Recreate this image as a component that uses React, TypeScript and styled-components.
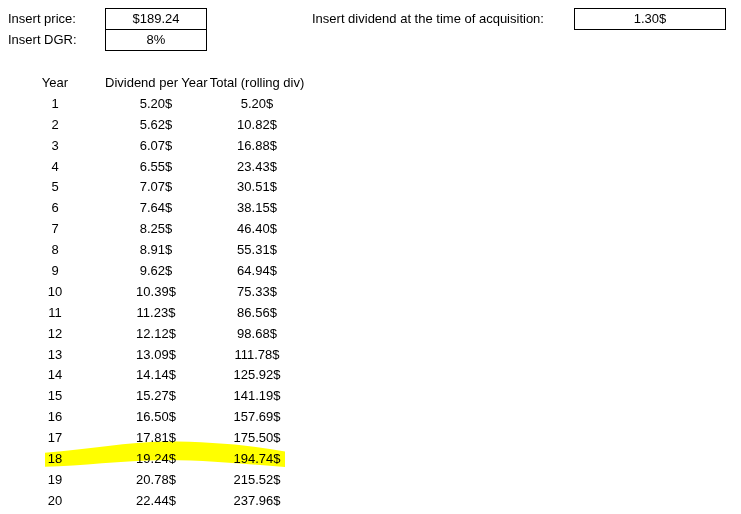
import React from "react";
import styled, { createGlobalStyle } from "styled-components";

const GlobalStyle = createGlobalStyle`
  html, body {
    margin: 0;
    padding: 0;
    background: #ffffff;
  }
  body {
    font-family: "Liberation Sans", Arial, sans-serif;
    font-size: 13px;
    color: #000000;
  }
`;

const Page = styled.div`
  position: relative;
  width: 741px;
  height: 514px;
  overflow: hidden;
  background: #ffffff;
  padding: 8px 0 0 5px;
  box-sizing: border-box;
`;

const InputGrid = styled.div`
  display: grid;
  grid-template-columns: 100px 102px 100px 267px 152px;
  grid-template-rows: 21px 21px 23px;
  align-items: start;
`;

const Label = styled.div<{ $pad?: number }>`
  height: 21px;
  line-height: 21px;
  padding-left: ${(p) => p.$pad ?? 3}px;
  white-space: nowrap;
`;

const InputBox = styled.div<{ $top?: boolean }>`
  box-sizing: border-box;
  height: 22px;
  line-height: ${(p) => (p.$top ? 20 : 21)}px;
  text-align: center;
  border: 1px solid #000;
  border-top: ${(p) => (p.$top ? "1px solid #000" : "none")};
  white-space: nowrap;
`;

const Table = styled.div`
  display: grid;
  grid-template-columns: 100px 102px 100px;
  grid-auto-rows: 20.9px;
`;

const Cell = styled.div`
  line-height: 20.9px;
  text-align: center;
  white-space: nowrap;
`;

const Highlight = styled.svg`
  position: absolute;
  left: 0;
  top: 0;
  pointer-events: none;
  mix-blend-mode: multiply;
`;

const dividends = [
  "5.20", "5.62", "6.07", "6.55", "7.07", "7.64", "8.25", "8.91", "9.62", "10.39",
  "11.23", "12.12", "13.09", "14.14", "15.27", "16.50", "17.81", "19.24", "20.78", "22.44",
];
const totals = [
  "5.20", "10.82", "16.88", "23.43", "30.51", "38.15", "46.40", "55.31", "64.94", "75.33",
  "86.56", "98.68", "111.78", "125.92", "141.19", "157.69", "175.50", "194.74", "215.52", "237.96",
];

export default function App() {
  return (
    <>
      <GlobalStyle />
      <Page>
        <InputGrid>
          <Label>Insert price:</Label>
          <InputBox $top>$189.24</InputBox>
          <div />
          <Label $pad={5}>Insert dividend at the time of acquisition:</Label>
          <InputBox $top>1.30$</InputBox>

          <Label>Insert DGR:</Label>
          <InputBox>8%</InputBox>
          <div />
          <div />
          <div />
        </InputGrid>
        <Table>
          <Cell>Year</Cell>
          <Cell>Dividend per Year</Cell>
          <Cell>Total (rolling div)</Cell>
          {dividends.map((d, i) => (
            <React.Fragment key={i}>
              <Cell>{i + 1}</Cell>
              <Cell>{d}$</Cell>
              <Cell>{totals[i]}$</Cell>
            </React.Fragment>
          ))}
        </Table>
        <Highlight width="741" height="514" viewBox="0 0 741 514">
          <path
            d="M45,452.7 C90,449 128,442 165,441.5 C210,441.5 250,445 285,451.5 L285,467 C250,464.5 215,460.5 165,460 C120,460.5 82,466 45,466.7 Z"
            fill="#ffff00"
          />
        </Highlight>
      </Page>
    </>
  );
}
